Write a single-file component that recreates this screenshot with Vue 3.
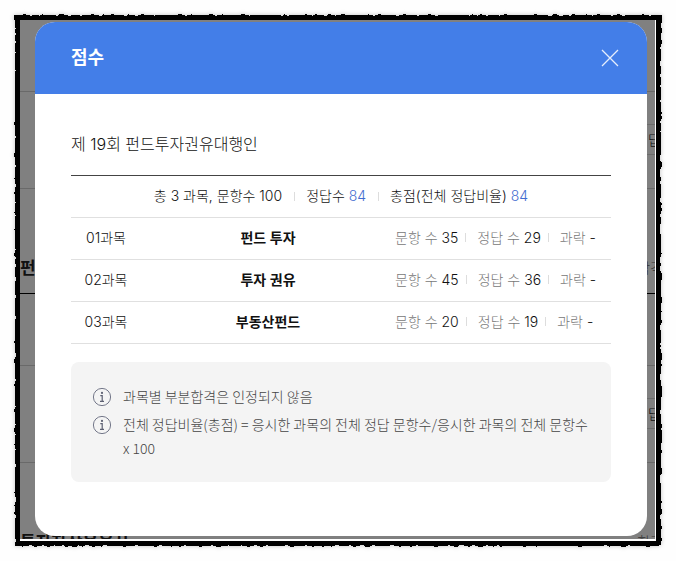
<script setup>
const rows = [
  { no: '01과목', name: '펀드 투자', total: 35, right: 29 },
  { no: '02과목', name: '투자 권유', total: 45, right: 36 },
  { no: '03과목', name: '부동산펀드', total: 20, right: 19 },
]
const notes = [
  '과목별 부분합격은 인정되지 않음',
  '전체 정답비율(총점) = 응시한 과목의 전체 정답 문항수/응시한 과목의 전체 문항수 x 100',
]
</script>

<template>
  <div class="frame">
    <svg class="defs" aria-hidden="true">
      <filter id="rough" x="-5%" y="-5%" width="110%" height="110%">
        <feTurbulence type="fractalNoise" baseFrequency="0.16" numOctaves="2" seed="4" />
        <feDisplacementMap in="SourceGraphic" scale="4" xChannelSelector="R" yChannelSelector="G" />
        <feGaussianBlur stdDeviation="0.4" />
      </filter>
    </svg>
    <div class="edge"></div>
    <div class="stage">
      <div class="under" aria-hidden="true">
        <div class="item first"></div>
        <div class="item"><span class="btn">답안</span></div>
        <div class="group"><b>펀</b><span>합격</span></div>
        <div class="item first"></div>
        <div class="item"><span class="btn">답안</span></div>
        <div class="group"><b>투자자산운용사</b><span>합격</span></div>
      </div>

      <section class="modal" role="dialog" aria-labelledby="title">
        <header>
          <h1 id="title">점수</h1>
          <button type="button" aria-label="닫기">
            <svg viewBox="0 0 18 18" width="18" height="18"><path d="M1 1L17 17M17 1L1 17" fill="none" stroke="#e6eefc" stroke-width="1.3" /></svg>
          </button>
        </header>
        <div class="body">
          <h2>제 19회 펀드투자권유대행인</h2>
          <div class="summary">
            <span>총 3 과목, 문항수 100</span>
            <span>정답수 <em>84</em></span>
            <span>총점(전체 정답비율) <em>84</em></span>
          </div>
          <table>
            <tbody>
              <tr v-for="r in rows" :key="r.no">
                <td class="no">{{ r.no }}</td>
                <th scope="row">{{ r.name }}</th>
                <td class="stats">
                  <div>
                    <span>문항 수 <i>{{ r.total }}</i></span>
                    <span>정답 수 <i>{{ r.right }}</i></span>
                    <span>과락 <i>-</i></span>
                  </div>
                </td>
              </tr>
            </tbody>
          </table>
          <ul>
            <li v-for="n in notes" :key="n">
              <svg viewBox="0 0 20 20" width="20" height="20" aria-hidden="true">
                <circle cx="10" cy="10" r="8.6" fill="none" stroke="#74788a" stroke-width="1" />
                <circle cx="10" cy="5.9" r="1.1" fill="#5c6072" />
                <path d="M8.3 8.7H10.2V14.3M8 14.4H12" fill="none" stroke="#5c6072" stroke-width="1.2" />
              </svg>
              <span>{{ n }}</span>
            </li>
          </ul>
        </div>
      </section>
    </div>
  </div>
</template>

<style>
body {
  margin: 0;
  background: #fefefe;
}
</style>

<style scoped>
.frame {
  position: relative;
  margin: 16px 16px 17px;
  padding: 4px;
  background: #000;
  font-family: Inter, "Noto Sans CJK KR", sans-serif;
  font-size: 14px;
  font-weight: 300;
  line-height: 24px;
  color: #111;
}
.defs {
  position: absolute;
  width: 0;
  height: 0;
}
.edge {
  position: absolute;
  inset: -1px;
  background: #000;
  filter: url(#rough) drop-shadow(0 0 2px rgba(0, 0, 0, 0.25));
}
.stage {
  position: relative;
  overflow: hidden;
  padding: 2px 8px 3px 15px;
  background: #808080;
  border-right: 1px solid #fff;
  border-bottom: 2px solid #fff;
}
.under {
  position: absolute;
  inset: 0;
  color: #111;
}
.item {
  box-sizing: border-box;
  height: 97px;
  padding-top: 32px;
  border-bottom: 1px solid #696969;
}
.item.first {
  height: 72px;
}
.btn {
  display: block;
  width: 48px;
  height: 29px;
  margin-left: auto;
  margin-right: -30px;
  border-top: 1px solid #6c6c6c;
  border-bottom: 1px solid #6c6c6c;
  line-height: 29px;
  text-align: center;
}
.group {
  box-sizing: border-box;
  height: 105px;
  padding-top: 67px;
  display: flex;
  justify-content: space-between;
  border-bottom: 1px solid #000;
  font-size: 17px;
}
.group b {
  font-weight: 700;
}
.group span {
  margin-right: -8px;
  font-size: 14px;
  color: #333;
}
.modal {
  position: relative;
  overflow: hidden;
  border-radius: 20px;
  background: #fff;
}
header {
  display: flex;
  align-items: center;
  justify-content: space-between;
  box-sizing: border-box;
  height: 72px;
  padding: 0 28px 1px 36px;
  background: #437ee8;
}
h1 {
  margin: 0;
  font-size: 18px;
  font-weight: 700;
  color: #fff;
}
button {
  display: flex;
  padding: 0;
  border: 0;
  background: none;
}
.body {
  padding: 38px 36px 54px;
}
h2 {
  margin: 0 0 19px;
  font-size: 16px;
  font-weight: 300;
}
.summary {
  display: flex;
  justify-content: center;
  height: 41px;
  line-height: 40px;
  border-top: 1px solid #444;
  border-bottom: 1px solid #e0e0e0;
}
.summary span + span,
.stats span + span {
  background: linear-gradient(#ddd, #ddd) left center / 1px 9px no-repeat;
}
.summary span + span {
  margin-left: 12px;
  padding-left: 12px;
}
em,
i {
  font-style: normal;
}
em {
  color: #3f6cd0;
}
table {
  width: 100%;
  table-layout: fixed;
  border-collapse: separate;
  border-spacing: 0;
}
td,
th {
  padding: 0 0 2px;
  line-height: 39px;
  text-align: center;
  border-bottom: 1px solid #e0e0e0;
}
th {
  font-weight: 600;
}
.no {
  width: 70px;
}
.stats {
  width: 216px;
}
.stats div {
  display: flex;
}
.stats span {
  color: #777;
  white-space: nowrap;
}
.stats span + span {
  margin-left: 7px;
  padding-left: 12px;
}
.stats i {
  color: #111;
}
ul {
  margin: 18px 0 0;
  padding: 22px 20px 22px 21px;
  list-style: none;
  border-radius: 8px;
  background: #f4f4f4;
  font-family: "Noto Sans CJK KR", sans-serif;
  word-break: keep-all;
}
li {
  display: flex;
  gap: 11px;
  color: #444;
}
li + li {
  margin-top: 4px;
}
li svg {
  flex: none;
  margin-top: 3px;
}
</style>
